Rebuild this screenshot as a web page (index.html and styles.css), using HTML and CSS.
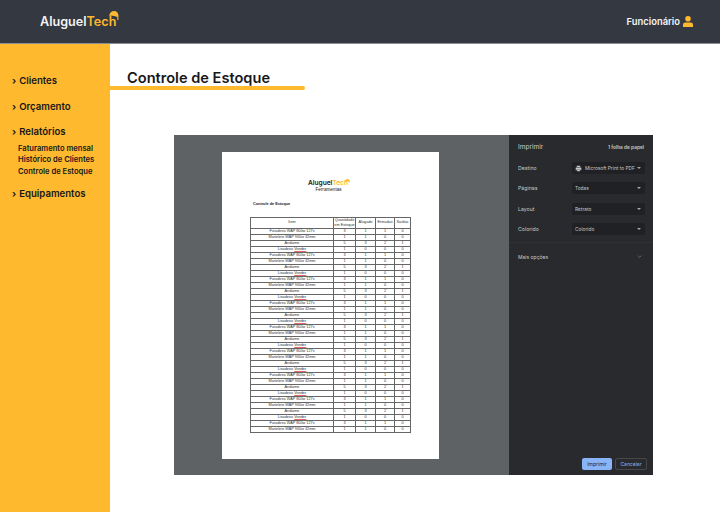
FILE: index.html
```html
<!DOCTYPE html>
<html lang="pt-BR">
<head>
    <meta charset="UTF-8">
    <meta name="viewport" content="width=device-width, initial-scale=1.0">
    <title>Controle de Estoque</title>
    <link rel="stylesheet" href="styles.css">
</head>
<body>
    <header class="topbar">
        <div class="logo">
            <span>Aluguel</span><span class="logo-tech">Tech</span>
            <svg class="logo-hat" viewBox="0 0 11 10" aria-hidden="true"><path d="M0 5.2C.6 2 3 0 5.6 0 8.4 0 10.4 2.2 10.4 5V10H9.2V6.6C7 5.4 3 5 0 5.2Z" fill="#ffb92e"/></svg>
        </div>
        <div class="user">
            Funcionário
            <svg class="user-icon" viewBox="0 0 10 11" aria-hidden="true"><circle cx="5" cy="2.8" r="2.8" fill="#ffb92e"/><path d="M0 11V8.6Q0 6.4 2.4 6.4H7.6Q10 6.4 10 8.6V11Z" fill="#ffb92e"/></svg>
        </div>
    </header>

    <div class="content">
        <nav class="sidebar">
            <a class="menu-item">Clientes</a>
            <a class="menu-item">Orçamento</a>
            <a class="menu-item">Relatórios</a>
            <div class="submenu">
                <a>Faturamento mensal</a>
                <a>Histórico de Clientes</a>
                <a>Controle de Estoque</a>
            </div>
            <a class="menu-item">Equipamentos</a>
        </nav>

        <main class="main">
            <h1 class="title">Controle de Estoque</h1>

            <section class="print-dialog">
                <div class="preview">
                    <div class="paper">
                        <div class="paper-logo">
                            <span>Aluguel<span class="logo-tech">Tech</span></span>
                            <svg class="paper-hat" viewBox="0 0 11 10" aria-hidden="true"><path d="M0 5.2C.6 2 3 0 5.6 0 8.4 0 10.4 2.2 10.4 5V10H9.2V6.6C7 5.4 3 5 0 5.2Z" fill="#ffb92e"/></svg>
                        </div>
                        <div class="paper-sub">Ferramentas</div>
                        <div class="paper-title">Controle de Estoque</div>
                        <table class="stock">
                            <thead>
                                <tr><th>Item</th><th>Quantidade<br>em Estoque</th><th>Alugado</th><th>Entradas</th><th>Saídas</th></tr>
                            </thead>
                            <tbody>
                                <tr><td>Furadeira WAP 800w 127v</td><td>3</td><td>1</td><td>1</td><td>0</td></tr>
                                <tr><td>Martelete WAP 900w 32mm</td><td>1</td><td>1</td><td>0</td><td>0</td></tr>
                                <tr><td>Andaime</td><td>5</td><td>3</td><td>2</td><td>1</td></tr>
                                <tr><td>Lixadeira <u>Vonder</u></td><td>1</td><td>0</td><td>0</td><td>0</td></tr>
                                <tr><td>Furadeira WAP 800w 127v</td><td>3</td><td>1</td><td>1</td><td>0</td></tr>
                                <tr><td>Martelete WAP 900w 32mm</td><td>1</td><td>1</td><td>0</td><td>0</td></tr>
                                <tr><td>Andaime</td><td>5</td><td>3</td><td>2</td><td>1</td></tr>
                                <tr><td>Lixadeira <u>Vonder</u></td><td>1</td><td>0</td><td>0</td><td>0</td></tr>
                                <tr><td>Furadeira WAP 800w 127v</td><td>3</td><td>1</td><td>1</td><td>0</td></tr>
                                <tr><td>Martelete WAP 900w 32mm</td><td>1</td><td>1</td><td>0</td><td>0</td></tr>
                                <tr><td>Andaime</td><td>5</td><td>3</td><td>2</td><td>1</td></tr>
                                <tr><td>Lixadeira <u>Vonder</u></td><td>1</td><td>0</td><td>0</td><td>0</td></tr>
                                <tr><td>Furadeira WAP 800w 127v</td><td>3</td><td>1</td><td>1</td><td>0</td></tr>
                                <tr><td>Martelete WAP 900w 32mm</td><td>1</td><td>1</td><td>0</td><td>0</td></tr>
                                <tr><td>Andaime</td><td>5</td><td>3</td><td>2</td><td>1</td></tr>
                                <tr><td>Lixadeira <u>Vonder</u></td><td>1</td><td>0</td><td>0</td><td>0</td></tr>
                                <tr><td>Furadeira WAP 800w 127v</td><td>3</td><td>1</td><td>1</td><td>0</td></tr>
                                <tr><td>Martelete WAP 900w 32mm</td><td>1</td><td>1</td><td>0</td><td>0</td></tr>
                                <tr><td>Andaime</td><td>5</td><td>3</td><td>2</td><td>1</td></tr>
                                <tr><td>Lixadeira <u>Vonder</u></td><td>1</td><td>0</td><td>0</td><td>0</td></tr>
                                <tr><td>Furadeira WAP 800w 127v</td><td>3</td><td>1</td><td>1</td><td>0</td></tr>
                                <tr><td>Martelete WAP 900w 32mm</td><td>1</td><td>1</td><td>0</td><td>0</td></tr>
                                <tr><td>Andaime</td><td>5</td><td>3</td><td>2</td><td>1</td></tr>
                                <tr><td>Lixadeira <u>Vonder</u></td><td>1</td><td>0</td><td>0</td><td>0</td></tr>
                                <tr><td>Furadeira WAP 800w 127v</td><td>3</td><td>1</td><td>1</td><td>0</td></tr>
                                <tr><td>Martelete WAP 900w 32mm</td><td>1</td><td>1</td><td>0</td><td>0</td></tr>
                                <tr><td>Andaime</td><td>5</td><td>3</td><td>2</td><td>1</td></tr>
                                <tr><td>Lixadeira <u>Vonder</u></td><td>1</td><td>0</td><td>0</td><td>0</td></tr>
                                <tr><td>Furadeira WAP 800w 127v</td><td>3</td><td>1</td><td>1</td><td>0</td></tr>
                                <tr><td>Martelete WAP 900w 32mm</td><td>1</td><td>1</td><td>0</td><td>0</td></tr>
                                <tr><td>Andaime</td><td>5</td><td>3</td><td>2</td><td>1</td></tr>
                                <tr><td>Lixadeira <u>Vonder</u></td><td>1</td><td>0</td><td>0</td><td>0</td></tr>
                                <tr><td>Furadeira WAP 800w 127v</td><td>3</td><td>1</td><td>1</td><td>0</td></tr>
                                <tr><td>Martelete WAP 900w 32mm</td><td>1</td><td>1</td><td>0</td><td>0</td></tr>
                            </tbody>
                        </table>
                    </div>
                </div>

                <aside class="panel">
                    <div class="panel-head">
                        <span class="panel-title">Imprimir</span>
                        <span class="panel-count">1 folha de papel</span>
                    </div>
                    <div class="field">
                        <span>Destino</span>
                        <div class="select">
                            <svg class="printer" viewBox="0 0 10 10" aria-hidden="true"><path d="M2.5 1H7.5V3H2.5ZM1 3.5H9V7.5H7.5V6H2.5V7.5H1ZM3 6.5H7V9H3Z" fill="#c4c7c5"/></svg>
                            <span class="select-text">Microsoft Print to PDF</span>
                        </div>
                    </div>
                    <div class="field"><span>Páginas</span><div class="select"><span class="select-text">Todas</span></div></div>
                    <div class="field"><span>Layout</span><div class="select"><span class="select-text">Retrato</span></div></div>
                    <div class="field"><span>Colorido</span><div class="select"><span class="select-text">Colorido</span></div></div>
                    <div class="more">
                        <span>Mais opções</span>
                        <svg class="chevron" viewBox="0 0 8 5" aria-hidden="true"><path d="M1 1L4 4L7 1" fill="none" stroke="#8f9296" stroke-width="1"/></svg>
                    </div>
                    <div class="panel-actions">
                        <button class="btn-primary">Imprimir</button>
                        <button class="btn-cancel">Cancelar</button>
                    </div>
                </aside>
            </section>
        </main>
    </div>
</body>
</html>
```
FILE: styles.css
```css
* {
    box-sizing: border-box;
}

body {
    margin: 0;
    height: 512px;
    overflow: hidden;
    font-family: "Inter", "Liberation Sans", sans-serif;
    background-color: #fff;
    color: #17171a;
    display: flex;
    flex-direction: column;
}

/* Barra superior */
.topbar {
    height: 44px;
    flex-shrink: 0;
    background-color: #343841;
    border-bottom: 1px solid #8c8e94;
    display: flex;
    align-items: center;
    justify-content: space-between;
    padding: 0 27px 0 40px;
    color: #f4f4f4;
}

.logo {
    position: relative;
    font-size: 12.6px;
    font-weight: 600;
}

.logo-tech {
    color: #ffb92e;
}

.logo-hat {
    position: absolute;
    right: -3px;
    top: -3px;
    width: 10px;
    height: 9px;
}

.user {
    display: flex;
    align-items: center;
    gap: 3px;
    font-size: 9.4px;
    font-weight: 600;
}

.user-icon {
    width: 10px;
    height: 11px;
}

.content {
    flex: 1;
    display: flex;
}

/* Menu lateral */
.sidebar {
    width: 110px;
    flex-shrink: 0;
    background-color: #ffb92e;
    padding: 30px 0 0 12px;
    display: flex;
    flex-direction: column;
}

.menu-item {
    font-size: 9.6px;
    font-weight: 600;
    line-height: 14px;
    margin-bottom: 11.5px;
}

.menu-item::before {
    content: "\203A";
    font-weight: 700;
    margin-right: 3px;
}

.submenu {
    margin: -8px 0 10px 6px;
    display: flex;
    flex-direction: column;
    font-size: 7.6px;
    font-weight: 600;
    line-height: 11.5px;
}

/* Contenu */
.main {
    flex: 1;
    padding-top: 26px;
}

.title {
    margin: 0 0 45px;
    width: 195px;
    padding-left: 17px;
    font-size: 14.6px;
    font-weight: 600;
    line-height: 16px;
    white-space: nowrap;
}

.title::after {
    content: "";
    display: block;
    height: 4px;
    margin-left: -17px;
    background-color: #ffb92e;
    border-radius: 0 2px 2px 0;
}

.print-dialog {
    margin-left: 64px;
    width: 479px;
    height: 340px;
    display: flex;
}

.preview {
    flex: 1;
    background-color: #5f6265;
    padding: 17px 0 0 48px;
}

.paper {
    width: 217px;
    height: 307px;
    background-color: #fff;
    padding-top: 26.8px;
    font-family: "Liberation Sans", sans-serif;
}

.paper-logo {
    display: flex;
    justify-content: center;
    padding-right: 3px;
    font-family: "Inter", sans-serif;
    font-size: 6.6px;
    font-weight: 600;
    line-height: 8px;
}

.paper-hat {
    width: 5px;
    height: 4.5px;
    margin-left: -3px;
}

.paper-sub {
    padding-right: 4px;
    font-size: 4.6px;
    line-height: 5px;
    text-align: center;
}

.paper-title {
    font-size: 3.8px;
    font-weight: 700;
    line-height: 5px;
    margin: 10px 0 10.2px 31px;
}

.stock {
    margin-left: 28px;
    width: 160px;
    border-collapse: collapse;
    table-layout: fixed;
    font-size: 3.8px;
    line-height: 5px;
    text-align: center;
    color: #333;
}

.stock th,
.stock td {
    border: 1px solid #666;
    padding: 0;
    height: 6px;
    font-weight: 400;
    overflow: hidden;
}

.stock th:nth-child(1) { width: 83px; }
.stock th:nth-child(2) { width: 22px; }
.stock th:nth-child(3) { width: 20px; }
.stock th:nth-child(4) { width: 19px; }
.stock th:nth-child(5) { width: 16px; }

.stock u {
    text-decoration-color: #d66;
}

/* Panneau d'impression */
.panel {
    width: 144px;
    background-color: #292a2d;
    color: #c8cacc;
    font-size: 5.2px;
    padding: 0 0 5px;
    display: flex;
    flex-direction: column;
}

.panel-head {
    display: flex;
    justify-content: space-between;
    align-items: center;
    height: 23px;
    padding: 1px 9px 0;
}

.panel-title {
    font-size: 6.5px;
}

.panel-count {
    font-size: 4.8px;
    font-weight: 600;
}

.field {
    display: flex;
    align-items: center;
    justify-content: space-between;
    height: 20.3px;
    padding: 0 8px 0 9px;
}

.select {
    position: relative;
    width: 73px;
    height: 12px;
    background-color: #202124;
    border-radius: 2px;
    display: flex;
    align-items: center;
    gap: 3px;
    padding-left: 3px;
    font-size: 4.8px;
}

.select::after {
    content: "";
    position: absolute;
    right: 4px;
    top: 5px;
    border-left: 2px solid transparent;
    border-right: 2px solid transparent;
    border-top: 2px solid #a6a8ab;
}

.printer {
    width: 7px;
    height: 7px;
}

.more {
    margin-top: 3px;
    border-top: 1px solid #303134;
    height: 28px;
    font-size: 5px;
    display: flex;
    align-items: center;
    justify-content: space-between;
    padding: 0 11px 0 9px;
}

.chevron {
    width: 5px;
    height: 3px;
}

.panel-actions {
    margin-top: auto;
    display: flex;
    justify-content: flex-end;
    gap: 3px;
    padding-right: 6px;
}

button {
    height: 12px;
    padding: 0;
    border-radius: 2px;
    font-family: inherit;
    font-size: 5px;
}

.btn-primary {
    width: 30px;
    background-color: #8ab4f8;
    border: none;
    color: #202124;
}

.btn-cancel {
    width: 32px;
    background-color: transparent;
    border: 1px solid #45474a;
    color: #8ab4f8;
}
```
